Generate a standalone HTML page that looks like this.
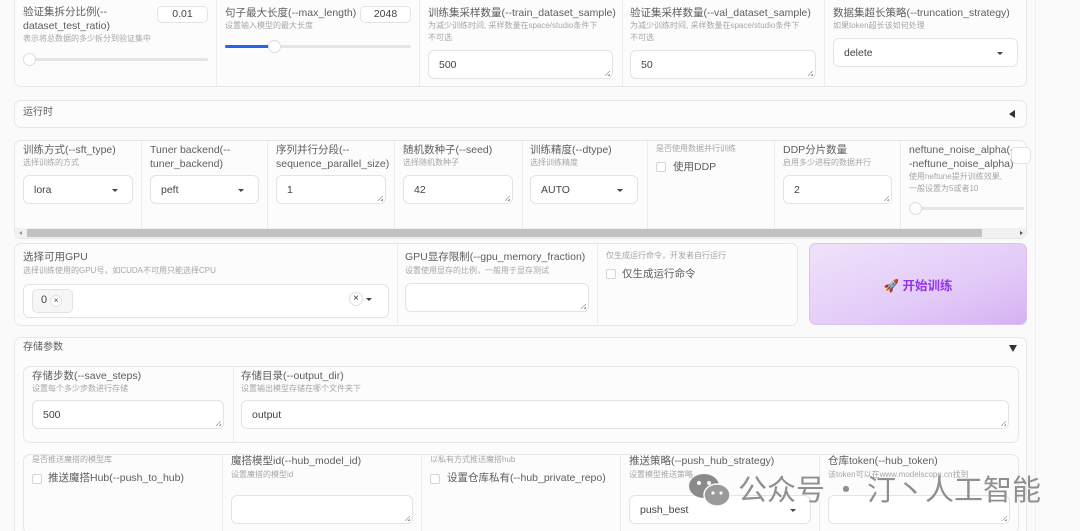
<!DOCTYPE html>
<html><head><meta charset="utf-8">
<style>
*{box-sizing:border-box;margin:0;padding:0}
html,body{width:1080px;height:531px;overflow:hidden}
body{background:#fafafa;font-family:"Liberation Sans","Noto Sans CJK SC",sans-serif;position:relative;color:#555}
.a{position:absolute}
.box{position:absolute;background:#fcfcfc;border:1px solid #e7e7e7;border-radius:7px}
.vl{position:absolute;width:1px;background:#ececec}
.lb{position:absolute;font-size:10.5px;line-height:14px;color:#5e5e5e;white-space:nowrap}
.sb{position:absolute;font-size:8px;line-height:12px;color:#a6a6a6;white-space:nowrap}
.in{position:absolute;border:1px solid #e3e3e3;border-radius:6px;background:#fff;font-size:10.5px;color:#444;padding-left:10px;display:flex;align-items:center}
.ta::after{content:"";position:absolute;right:2px;bottom:2px;width:5px;height:5px;background:linear-gradient(135deg,transparent 45%,#999 45%,#999 55%,transparent 55%,transparent 75%,#999 75%)}
.dd::after{content:"";position:absolute;right:14px;top:50%;margin-top:-1px;border:3px solid transparent;border-top:3px solid #444}
.nb{position:absolute;border:1px solid #e3e3e3;border-radius:5px;background:#fff;font-size:10.5px;color:#444;text-align:center;line-height:15px}
.tr{position:absolute;height:3px;background:#e5e5e5;border-radius:2px}
.th{position:absolute;width:13px;height:13px;border-radius:50%;border:1px solid #ddd;background:#fff}
.cb{position:absolute;width:10px;height:10px;border:1px solid #d5d5d5;border-radius:2px;background:#fff}
</style></head><body>
<div class="vl" style="left:1035px;top:0;height:531px;background:#eee"></div>

<div class="box" style="left:14px;top:-8px;width:1013px;height:95px"></div>
<div class="vl" style="left:216px;top:0;height:86px"></div>
<div class="vl" style="left:419px;top:0;height:86px"></div>
<div class="vl" style="left:622px;top:0;height:86px"></div>
<div class="vl" style="left:824px;top:0;height:86px"></div>
<div class="lb" style="left:23px;top:5px">验证集拆分比例(--<br>dataset_test_ratio)</div>
<div class="nb" style="left:157px;top:6px;width:51px;height:17px">0.01</div>
<div class="sb" style="left:23px;top:33px">表示将总数据的多少拆分到验证集中</div>
<div class="tr" style="left:26px;top:58px;width:182px"></div>
<div class="th" style="left:23px;top:53px"></div>
<div class="lb" style="left:225px;top:6px">句子最大长度(--max_length)</div>
<div class="nb" style="left:360px;top:6px;width:51px;height:17px">2048</div>
<div class="sb" style="left:225px;top:20px">设置输入模型的最大长度</div>
<div class="tr" style="left:225px;top:45px;width:186px"></div>
<div class="tr" style="left:225px;top:45px;width:45px;background:#2563eb"></div>
<div class="th" style="left:268px;top:40px"></div>
<div class="lb" style="left:428px;top:6px">训练集采样数量(--train_dataset_sample)</div>
<div class="sb" style="left:428px;top:20px">为减少训练时间, 采样数量在space/studio条件下<br>不可选</div>
<div class="in ta" style="left:428px;top:50px;width:185px;height:29px">500</div>
<div class="lb" style="left:630px;top:6px">验证集采样数量(--val_dataset_sample)</div>
<div class="sb" style="left:630px;top:20px">为减少训练时间, 采样数量在space/studio条件下<br>不可选</div>
<div class="in ta" style="left:630px;top:50px;width:186px;height:29px">50</div>
<div class="lb" style="left:833px;top:6px">数据集超长策略(--truncation_strategy)</div>
<div class="sb" style="left:833px;top:20px">如果token超长该如何处理</div>
<div class="in dd" style="left:833px;top:38px;width:185px;height:29px">delete</div>

<div class="box" style="left:14px;top:100px;width:1013px;height:28px"></div>
<div class="lb" style="left:23px;top:106px;font-size:10px">运行时</div>
<div class="a" style="left:1009px;top:110px;border:4px solid transparent;border-right:6px solid #333;border-left:0"></div>

<div class="box" style="left:14px;top:140px;width:1013px;height:99px;overflow:hidden"></div>
<div class="vl" style="left:141px;top:141px;height:87px"></div>
<div class="vl" style="left:267px;top:141px;height:87px"></div>
<div class="vl" style="left:394px;top:141px;height:87px"></div>
<div class="vl" style="left:522px;top:141px;height:87px"></div>
<div class="vl" style="left:647px;top:141px;height:87px"></div>
<div class="vl" style="left:774px;top:141px;height:87px"></div>
<div class="vl" style="left:900px;top:141px;height:87px"></div>
<div class="lb" style="left:23px;top:143px">训练方式(--sft_type)</div>
<div class="sb" style="left:23px;top:157px">选择训练的方式</div>
<div class="in dd" style="left:23px;top:175px;width:110px;height:29px">lora</div>
<div class="lb" style="left:150px;top:143px">Tuner backend(--<br>tuner_backend)</div>
<div class="in dd" style="left:150px;top:175px;width:109px;height:29px">peft</div>
<div class="lb" style="left:276px;top:143px">序列并行分段(--<br>sequence_parallel_size)</div>
<div class="in ta" style="left:276px;top:175px;width:110px;height:29px">1</div>
<div class="lb" style="left:403px;top:143px">随机数种子(--seed)</div>
<div class="sb" style="left:403px;top:157px">选择随机数种子</div>
<div class="in ta" style="left:403px;top:175px;width:110px;height:29px">42</div>
<div class="lb" style="left:530px;top:143px">训练精度(--dtype)</div>
<div class="sb" style="left:530px;top:157px">选择训练精度</div>
<div class="in dd" style="left:530px;top:175px;width:108px;height:29px">AUTO</div>
<div class="sb" style="left:656px;top:143px">是否使用数据并行训练</div>
<div class="cb" style="left:656px;top:162px"></div>
<div class="lb" style="left:673px;top:160px">使用DDP</div>
<div class="lb" style="left:783px;top:143px">DDP分片数量</div>
<div class="sb" style="left:783px;top:157px">启用多少进程的数据并行</div>
<div class="in ta" style="left:783px;top:175px;width:109px;height:29px">2</div>
<div class="lb" style="left:909px;top:143px">neftune_noise_alpha(-<br>-neftune_noise_alpha)</div>
<div class="sb" style="left:909px;top:171px">使用neftune提升训练效果,<br>一般设置为5或者10</div>
<div class="nb" style="left:1011px;top:147px;width:20px;height:17px"></div>
<div class="tr" style="left:912px;top:207px;width:112px"></div>
<div class="th" style="left:909px;top:202px"></div>
<div class="a" style="left:15px;top:228px;width:1011px;height:10px;background:#f1f1f1"></div>
<div class="a" style="left:27px;top:229px;width:955px;height:8px;background:#c1c1c1"></div>
<div class="a" style="left:19px;top:231px;border:2px solid transparent;border-right:3px solid #999;border-left:0"></div>
<div class="a" style="left:1020px;top:231px;border:2px solid transparent;border-left:3px solid #555;border-right:0"></div>

<div class="box" style="left:14px;top:243px;width:784px;height:83px"></div>
<div class="vl" style="left:397px;top:244px;height:81px"></div>
<div class="vl" style="left:597px;top:244px;height:81px"></div>
<div class="lb" style="left:23px;top:250px">选择可用GPU</div>
<div class="sb" style="left:23px;top:265px">选择训练使用的GPU号，如CUDA不可用只能选择CPU</div>
<div class="in" style="left:23px;top:284px;width:366px;height:34px"></div>
<div class="a" style="left:32px;top:289px;width:41px;height:24px;border:1px solid #e3e3e3;border-radius:5px;background:#f6f6f6;font-size:11px;color:#444;padding:4px 0 0 8px">0 <span style="display:inline-block;width:12px;height:12px;border-radius:50%;border:1px solid #e0e0e0;background:#fff;font-size:8px;text-align:center;line-height:10px">×</span></div>
<div class="a" style="left:349px;top:292px;width:14px;height:14px;border-radius:50%;border:1px solid #e0e0e0;background:#fff;font-size:10px;text-align:center;line-height:12px;color:#333">×</div>
<div class="a" style="left:366px;top:298px;border:3px solid transparent;border-top:3px solid #444"></div>
<div class="lb" style="left:405px;top:250px">GPU显存限制(--gpu_memory_fraction)</div>
<div class="sb" style="left:405px;top:265px">设置使用显存的比例，一般用于显存测试</div>
<div class="in ta" style="left:405px;top:283px;width:184px;height:29px"></div>
<div class="sb" style="left:606px;top:250px">仅生成运行命令，开发者自行运行</div>
<div class="cb" style="left:606px;top:269px"></div>
<div class="lb" style="left:622px;top:267px">仅生成运行命令</div>
<div class="a" style="left:809px;top:243px;width:218px;height:82px;border-radius:7px;background:linear-gradient(160deg,#efe2fb 0%,#e3cbf8 60%,#d6b1f3 100%);border:1px solid #dcc1f6;display:flex;align-items:center;justify-content:center;font-size:12.5px;color:#9333ea;font-weight:bold">🚀 开始训练</div>

<div class="box" style="left:14px;top:337px;width:1013px;height:210px"></div>
<div class="lb" style="left:23px;top:341px;font-size:10px">存储参数</div>
<div class="a" style="left:1009px;top:345px;border:4px solid transparent;border-top:7px solid #333;border-bottom:0"></div>
<div class="box" style="left:23px;top:366px;width:996px;height:77px"></div>
<div class="vl" style="left:233px;top:367px;height:75px"></div>
<div class="lb" style="left:32px;top:369px">存储步数(--save_steps)</div>
<div class="sb" style="left:32px;top:383px">设置每个多少步数进行存储</div>
<div class="in ta" style="left:32px;top:400px;width:192px;height:29px">500</div>
<div class="lb" style="left:241px;top:369px">存储目录(--output_dir)</div>
<div class="sb" style="left:241px;top:383px">设置输出模型存储在哪个文件夹下</div>
<div class="in ta" style="left:241px;top:400px;width:768px;height:29px">output</div>
<div class="box" style="left:23px;top:454px;width:996px;height:80px"></div>
<div class="vl" style="left:222px;top:455px;height:76px"></div>
<div class="vl" style="left:421px;top:455px;height:76px"></div>
<div class="vl" style="left:620px;top:455px;height:76px"></div>
<div class="vl" style="left:819px;top:455px;height:76px"></div>
<div class="sb" style="left:32px;top:454px">是否推送魔搭的模型库</div>
<div class="cb" style="left:32px;top:474px"></div>
<div class="lb" style="left:48px;top:471px">推送魔搭Hub(--push_to_hub)</div>
<div class="lb" style="left:231px;top:454px">魔搭模型id(--hub_model_id)</div>
<div class="sb" style="left:231px;top:469px">设置魔搭的模型id</div>
<div class="in ta" style="left:231px;top:495px;width:182px;height:29px"></div>
<div class="sb" style="left:430px;top:454px">以私有方式推送魔搭hub</div>
<div class="cb" style="left:430px;top:474px"></div>
<div class="lb" style="left:447px;top:471px">设置仓库私有(--hub_private_repo)</div>
<div class="lb" style="left:629px;top:454px">推送策略(--push_hub_strategy)</div>
<div class="sb" style="left:629px;top:469px">设置模型推送策略</div>
<div class="in dd" style="left:629px;top:495px;width:182px;height:29px">push_best</div>
<div class="lb" style="left:828px;top:454px">仓库token(--hub_token)</div>
<div class="sb" style="left:828px;top:469px">该token可以在www.modelscope.cn找到</div>
<div class="in ta" style="left:828px;top:495px;width:182px;height:29px"></div>

<svg class="a" style="left:688px;top:472px" width="44" height="36" viewBox="0 0 44 36">
<ellipse cx="16" cy="14" rx="15" ry="12" fill="#8a8a8a"/>
<ellipse cx="29" cy="23" rx="13" ry="11" fill="#9a9a9a" stroke="#fafafa" stroke-width="1.5"/>
<circle cx="11" cy="11" r="2" fill="#fafafa"/><circle cx="21" cy="11" r="2" fill="#fafafa"/>
<circle cx="25" cy="21" r="1.6" fill="#fafafa"/><circle cx="33" cy="21" r="1.6" fill="#fafafa"/>
</svg>
<div class="a" style="left:738px;top:470px;font-size:29px;line-height:36px;color:#8f8f8f;white-space:nowrap;font-family:'Noto Sans CJK SC',sans-serif">公众号 · 汀丶人工智能</div>
</body></html>
